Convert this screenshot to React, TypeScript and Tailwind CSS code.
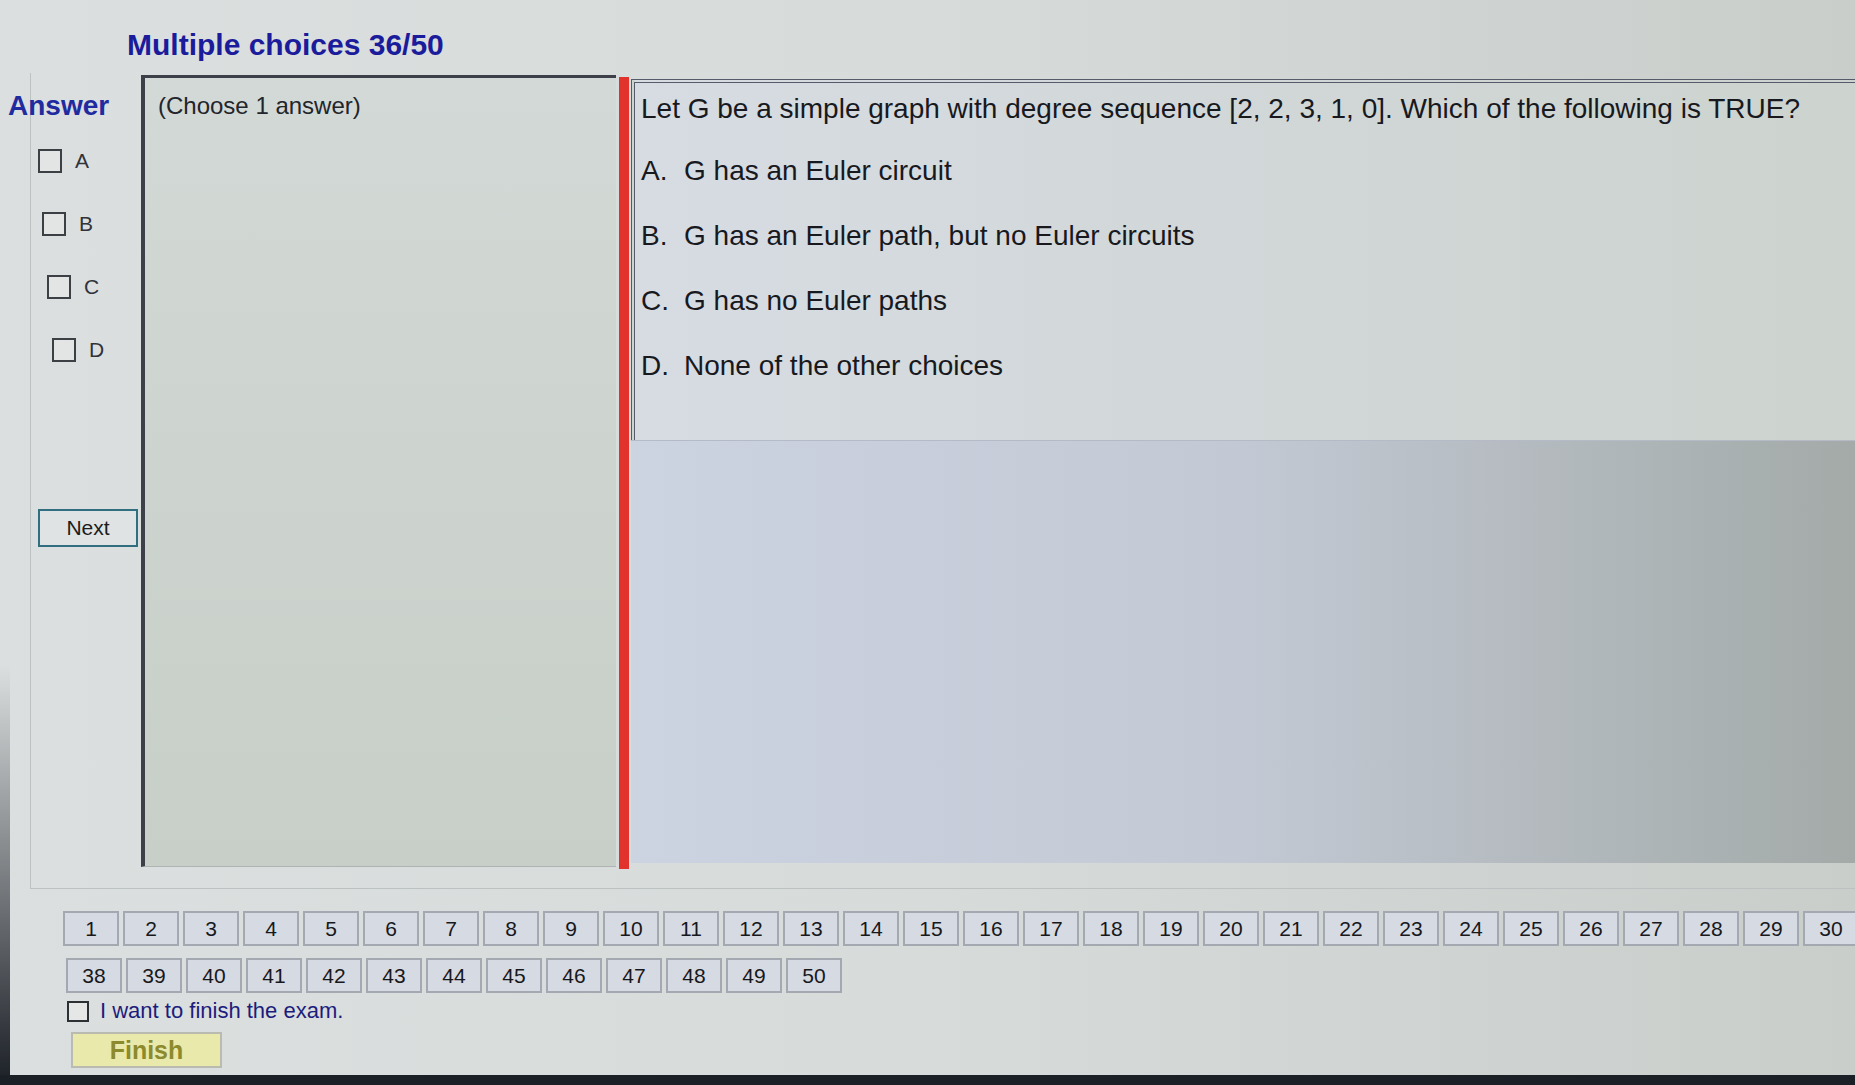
import React from 'react';

/* ── 기본 데이터 ───────────────────────────────────────────── */
const choices = ['A', 'B', 'C', 'D'];
// the photo is taken at an angle, so each row sits a little further right
const boxShift = ['ml-[7px]', 'ml-[11px]', 'ml-[16px]', 'ml-[21px]'];

const options = [
  { key: 'A.', text: 'G has an Euler circuit' },
  { key: 'B.', text: 'G has an Euler path, but no Euler circuits' },
  { key: 'C.', text: 'G has no Euler paths' },
  { key: 'D.', text: 'None of the other choices' },
];

const row1 = Array.from({ length: 37 }, (_, i) => i + 1);
const row2 = Array.from({ length: 13 }, (_, i) => i + 38);

function NumButton({ n }: { n: number }) {
  return (
    <button className="shrink-0 w-[56px] h-[35px] bg-[#d6dae2] border-2 border-[#a4a9b1] text-[#16181c] text-[21px] flex items-center justify-center">
      {n}
    </button>
  );
}

export default function App() {
  return (
    <div className="relative w-[1855px] h-[1085px] overflow-hidden bg-linear-to-r from-[#dcdfdf] via-[#d7dbda] to-[#c9cecb] font-['Liberation_Sans',Arial,sans-serif]">
      {/* Title */}
      <div className="h-[73px] pl-[127px] pt-[28px]">
        <h1 className="text-[30px] leading-[34px] font-bold text-[#1b1c9c]">Multiple choices 36/50</h1>
      </div>

      {/* Frame */}
      <div className="ml-[30px] w-[1825px] border-l border-b border-[#bcc1c1] pb-[25px]">
        <div className="flex h-[790px]">
          {/* Answer column */}
          <div className="w-[110px] shrink-0 flex flex-col">
            <div className="-ml-[23px] mt-[17px] text-[28px] leading-[32px] font-bold text-[#1f2b9f]">Answer</div>
            <div className="mt-[27px] flex flex-col gap-[39px]">
              {choices.map((c, i) => (
                <label key={c} className={`flex items-center gap-[13px] ${boxShift[i]}`}>
                  <span className="w-[24px] h-[24px] border-2 border-[#3c3f44] bg-[#e2e5e4]" />
                  <span className="text-[21px] leading-[24px] text-[#30333a]">{c}</span>
                </label>
              ))}
            </div>
            <button className="ml-[7px] mt-[147px] w-[100px] h-[38px] border-2 border-[#2f6f80] bg-[#dfe3e3] text-[21px] text-[#1a1c20]">
              Next
            </button>
          </div>

          {/* Answer area */}
          <div className="w-[475px] shrink-0 h-[792px] mt-[2px] bg-linear-to-b from-[#d3d9d6] to-[#c7cfc8] border-l-4 border-t-[3px] border-[#3d4049] border-b border-b-[#aeb3b3] pl-[13px] pt-[14px]">
            <p className="text-[24px] leading-[28px] text-[#22252b]">(Choose 1 answer)</p>
          </div>

          {/* Red divider */}
          <div className="w-[10px] shrink-0 ml-[3px] mt-[4px] h-[792px] bg-[#e1322b]" />

          {/* Question */}
          <div className="flex-1 flex flex-col ml-[2px] mt-[6px]">
            <div className="h-[361px] border-t-4 border-l-4 border-double border-[#565b6c] bg-linear-to-r from-[#d6dce2] to-[#cdd3ce] pl-[6px] pt-[9px]">
              <p className="text-[28px] leading-[34px] text-[#17191e] whitespace-nowrap">
                Let G be a simple graph with degree sequence [2, 2, 3, 1, 0]. Which of the following is TRUE?
              </p>
              <div className="mt-[28px] flex flex-col gap-[31px]">
                {options.map((o) => (
                  <p key={o.key} className="text-[28px] leading-[34px] text-[#17191e] flex">
                    <span className="w-[43px] shrink-0">{o.key}</span>
                    <span>{o.text}</span>
                  </p>
                ))}
              </div>
            </div>
            <div className="flex-1 border-t border-[#b4bac6] bg-linear-to-r from-[#ccd3e1] via-[#c3c9d4] to-[#a3aaa8]" />
          </div>
        </div>
      </div>

      {/* Question navigation */}
      <div className="pl-[63px] pt-[22px]">
        <div className="flex gap-[4px] w-[1792px] overflow-hidden">
          {row1.map((n) => (
            <NumButton key={n} n={n} />
          ))}
        </div>
        <div className="flex gap-[4px] mt-[12px] ml-[3px]">
          {row2.map((n) => (
            <NumButton key={n} n={n} />
          ))}
        </div>
        <label className="flex items-center gap-[11px] mt-[6px] ml-[4px]">
          <span className="w-[22px] h-[21px] border-2 border-[#2c2f34] bg-[#e4e7e6]" />
          <span className="text-[22px] leading-[24px] text-[#1c1c7c]">I want to finish the exam.</span>
        </label>
        <button className="mt-[9px] ml-[8px] w-[151px] h-[36px] bg-[#e9e9ab] border-2 border-[#b9bab0] text-[25px] leading-[28px] font-bold text-[#8c8a2c]">
          Finish
        </button>
      </div>

      {/* Monitor bezel */}
      <div className="absolute left-0 right-0 bottom-0 h-[10px] bg-[#1b1f26]" />
      <div className="absolute left-0 bottom-0 w-[10px] h-[420px] bg-linear-to-b from-transparent to-[#1b1f26]" />
    </div>
  );
}
